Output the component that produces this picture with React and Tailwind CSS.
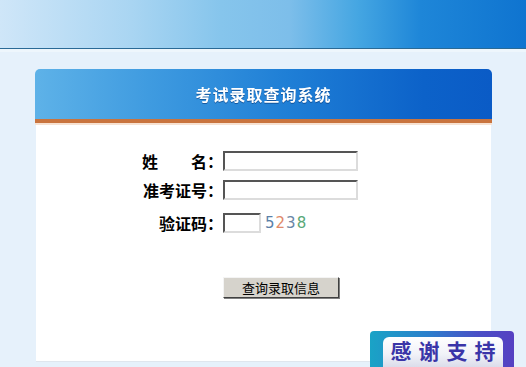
export default function App() {
    const serif = {fontFamily: '"Noto Sans CJK SC", "DejaVu Sans", sans-serif'};

    return (
        <div className="relative w-[526px] h-[367px] overflow-hidden bg-[#e6f1fb]" style={serif}>
            {/* 상단 배너 */}
            <div className="h-[49px] bg-[linear-gradient(90deg,#cfe6f8_0%,#a9d5f2_25%,#86c5ec_42%,#7dbeea_55%,#45a6e2_68%,#1e86d8_80%,#0f74d0_100%)] border-b border-[#2a6a96]"></div>
            <div className="h-[3px] bg-[#eef6fc]"></div>

            {/* 조회 패널 */}
            <div className="mt-[17px] ml-[35px] w-[457px] flex flex-col">
                <div className="h-[50px] rounded-t-[5px] bg-[linear-gradient(90deg,#5eb2e8_0%,#3f9be0_25%,#1f7fd6_55%,#0c62c9_85%,#0a5bc6_100%)] flex items-center justify-center">
                    <span className="text-white text-[16px] font-bold tracking-[1px] drop-shadow-[0_1px_0_rgba(0,40,100,0.5)]">考试录取查询系统</span>
                </div>
                <div className="h-[4px] bg-[#c9743e]"></div>
                <div className="h-[2px] bg-[#f7e2d2]"></div>
                <div className="mx-px h-[237px] bg-white border-b border-[#dfe6ee] flex flex-col">
                    <div className="mt-[26px] flex flex-col gap-[9px]">
                        <div className="flex items-center h-[20px]">
                            <div className="w-[187px] flex justify-end text-[16px] font-bold text-black leading-none">
                                <span className="mr-[33px]">姓</span><span>名：</span>
                            </div>
                            <input className="w-[135px] h-[20px] border-2 border-t-[#555] border-l-[#555] border-r-[#dcdcdc] border-b-[#dcdcdc] bg-white outline-none" />
                        </div>
                        <div className="flex items-center h-[20px]">
                            <div className="w-[187px] text-right text-[16px] font-bold text-black leading-none">准考证号：</div>
                            <input className="w-[135px] h-[20px] border-2 border-t-[#555] border-l-[#555] border-r-[#dcdcdc] border-b-[#dcdcdc] bg-white outline-none" />
                        </div>
                        <div className="flex items-center h-[20px] mt-[4px]">
                            <div className="w-[187px] text-right text-[16px] font-bold text-black leading-none">验证码：</div>
                            <input className="w-[38px] h-[20px] border-2 border-t-[#555] border-l-[#555] border-r-[#dcdcdc] border-b-[#dcdcdc] bg-white outline-none" />
                            <span className="ml-[4px] text-[15px] tracking-[1px] leading-none" style={{fontFamily: '"DejaVu Sans", sans-serif'}}>
                                <span className="text-[#5a7fa8]">5</span>
                                <span className="text-[#e08a6a]">2</span>
                                <span className="text-[#6a86a6]">3</span>
                                <span className="text-[#5aa878]">8</span>
                            </span>
                        </div>
                    </div>
                    <div className="mt-[41px] ml-[187px]">
                        <button className="w-[116px] h-[21px] bg-[#d6d3cc] border border-t-[#f4f4f4] border-l-[#f4f4f4] border-r-[#404040] border-b-[#404040] shadow-[1px_1px_0_#808080] text-[13px] text-black leading-none">
                            查询录取信息
                        </button>
                    </div>
                </div>
            </div>

            {/* 감사 배지 */}
            <div className="absolute left-[370px] top-[331px] w-[144px] h-[40px] rounded-t-[4px] bg-[linear-gradient(90deg,#1aa3c6_0%,#2b7fcc_40%,#4a4fc6_75%,#5640c2_100%)] pt-[6px] pl-[13px] pr-[11px]">
                <div className="h-full rounded-t-[6px] bg-[linear-gradient(180deg,#ffffff_0%,#f1f2f8_50%,#d4d6e6_100%)] flex justify-center pt-[3px]">
                    <span className="text-[21px] font-bold text-[#3a35a8] tracking-[7px] ml-[7px] leading-none">感谢支持</span>
                </div>
            </div>
        </div>
    );
}
